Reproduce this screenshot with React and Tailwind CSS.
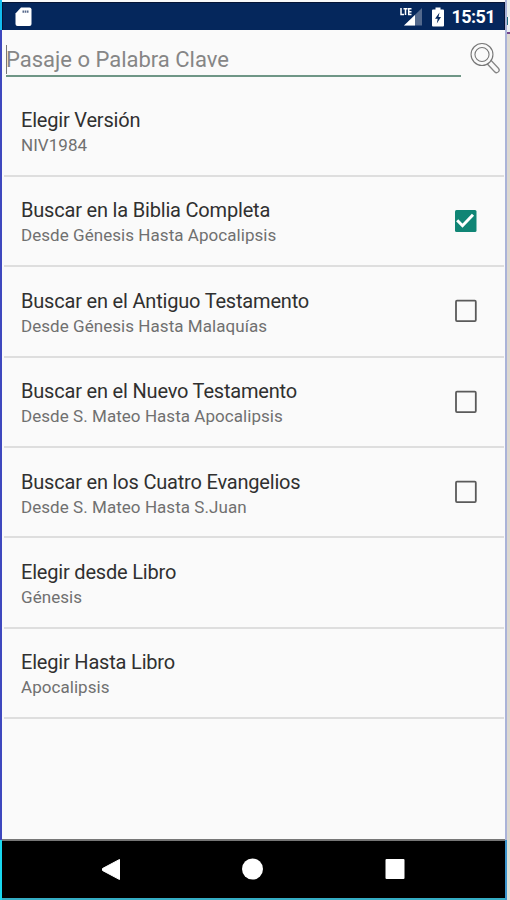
import { useState } from 'react';

const initialRows = [
  { title: 'Elegir Versión', detail: 'NIV1984' },
  { title: 'Buscar en la Biblia Completa', detail: 'Desde Génesis Hasta Apocalipsis', checked: true },
  { title: 'Buscar en el Antiguo Testamento', detail: 'Desde Génesis Hasta Malaquías', checked: false },
  { title: 'Buscar en el Nuevo Testamento', detail: 'Desde S. Mateo Hasta Apocalipsis', checked: false },
  { title: 'Buscar en los Cuatro Evangelios', detail: 'Desde S. Mateo Hasta S.Juan', checked: false },
  { title: 'Elegir desde Libro', detail: 'Génesis' },
  { title: 'Elegir Hasta Libro', detail: 'Apocalipsis' },
];

const Checkbox = ({ checked, onClick }) => (
  <button type="button" role="checkbox" aria-checked={checked} onClick={onClick} className="mt-8 h-6 w-6">
    <svg width="24" height="24" viewBox="0 0 24 24" fill="none">
      {checked ? (
        <>
          <rect x="1" y="1" width="21.5" height="22" rx="1.5" fill="#108575" />
          <path d="M3.2 11.2 L8.500 16.700 L19 5.700" stroke="#fff" strokeWidth="3" />
        </>
      ) : (
        <rect x="2" y="1.700" width="19.800" height="20.400" rx="1" stroke="#5a5a5a" strokeWidth="1.8" />
      )}
    </svg>
  </button>
);

const StatusBar = () => (
  <div className="flex h-7 items-center justify-between border border-b-0 border-[#061536] bg-[#05275c] pr-[9px] pl-3">
    <svg width="18" height="20" viewBox="0 0 18 20">
      <path d="M6 0.500 H14.500 Q16.500 0.500 16.500 2.500 V17 Q16.500 19 14.500 19 H2.500 Q0.500 19 0.500 17 V6.500 Z" fill="#fff" />
      <path d="M7.500 4.700h6.500" stroke="#596b8c" strokeWidth="2.200" strokeDasharray="1.600 0.600" />
    </svg>
    <div className="flex items-center">
      <svg width="23" height="20" viewBox="0 0 23 20">
        <path d="M22 1 V18.500 H4 Z" fill="#53698d" />
        <path d="M15 8 V18.500 H4 Z" fill="#fff" />
        <path d="M0 0 H11.500 V9.500 H0 Z" fill="#05275c" />
        <path d="M1 1v6.500h3M3.500 1.700h4M5.500 1.700V8M11.500 1.700H8.700V7.600h2.800M8.700 4.700h2.800" stroke="#fff" strokeWidth="1.500" fill="none" />
      </svg>
      <svg className="ml-2" width="14" height="20" viewBox="0 0 14 20">
        <path d="M4.500 0.500 h5 v2 H12 q1 0 1 1 V18.500 q0 1 -1 1 H2 q-1 0 -1 -1 V3.500 q0 -1 1 -1 H4.500 Z" fill="#fff" />
        <path d="M8.500 5.500 L4 11.800 H6.700 L5.800 16.500 L10 10 H7.500 Z" fill="#05275c" />
      </svg>
      <span className="ml-[7px] text-[18px] leading-7 font-bold tracking-[-0.6px] text-white">15:51</span>
    </div>
  </div>
);

const SearchBar = () => (
  <div className="flex h-[56.5px] shrink-0 items-start">
    <div className="ml-1 flex h-[47px] w-[455px] items-center border-b-2 border-[#6f9686] pt-[13px]">
      <span className="h-[29px] w-px shrink-0 bg-[#777]" />
      <span className="-ml-px text-[22px] whitespace-nowrap text-[#868686]">Pasaje o Palabra Clave</span>
    </div>
    <svg className="mt-[11px] ml-[7px]" width="34" height="34" viewBox="0 0 34 34" fill="none">
      <path d="M21 21 L28.500 29" stroke="#858585" strokeWidth="6.500" strokeLinecap="round" />
      <path d="M21.500 21.500 L28.500 29" stroke="#fafafa" strokeWidth="4" strokeLinecap="round" />
      <circle cx="14" cy="13.500" r="9" fill="#fafafa" stroke="#777" strokeWidth="5" />
      <circle cx="14" cy="13.500" r="9" stroke="#fafafa" strokeWidth="2.800" />
    </svg>
  </div>
);

const OptionRow = ({ row, onToggle }) => (
  <div className="ml-[2px] flex h-[90.4px] w-[500px] shrink-0 justify-between border-b-2 border-[#dedede] pr-[26px] pl-[17px]">
    <div className="pt-[20.5px]">
      <div className="text-[20px] leading-[26px] tracking-[-0.19px] whitespace-nowrap text-[#303030]">{row.title}</div>
      <div className="text-[17px] leading-[24px] tracking-[0.05px] whitespace-nowrap text-[#707070]">{row.detail}</div>
    </div>
    {row.checked !== undefined && <Checkbox checked={row.checked} onClick={onToggle} />}
  </div>
);

const NavigationBar = () => (
  <div className="flex h-[61px] items-start justify-between border-t-2 border-b-2 border-t-[#777] border-b-[#35adc4] bg-black pr-[100px] pl-[99px] pt-[17px]">
    <svg width="20" height="24" viewBox="0 0 20 24">
      <path d="M18.500 1.500 V21.500 L1.500 12.500 V10.500 Z" fill="#fff" stroke="#fff" strokeLinejoin="round" />
    </svg>
    <svg width="22" height="22" viewBox="0 0 22 22">
      <circle cx="10.5" cy="11" r="10.5" fill="#fff" />
    </svg>
    <svg width="20" height="22" viewBox="0 0 20 22">
      <rect x="0.500" y="1" width="19" height="20" rx="1" fill="#fff" />
    </svg>
  </div>
);

const App = () => {
  const [rows, setRows] = useState(initialRows);

  const toggle = (index) => {
    setRows(rows.map((row, i) => (i === index ? { ...row, checked: !row.checked } : row)));
  };

  return (
    <div className="flex h-[900px] w-[510px] overflow-hidden bg-[#fafafa] font-[Roboto,sans-serif]">
      <div className="flex w-[2px] flex-col">
        <div className="h-[30px] bg-[#12bdf0]" />
        <div className="grow bg-[#3e48be]" />
        <div className="h-[60px] bg-[#18d7ef]" />
      </div>
      <div className="flex w-[503px] flex-col pt-[2px]">
        <StatusBar />
        <SearchBar />
        <div className="flex grow flex-col">
          {rows.map((row, index) => (
            <OptionRow key={row.title} row={row} onToggle={() => toggle(index)} />
          ))}
        </div>
        <NavigationBar />
      </div>
      <div className="flex w-[2px] flex-col">
        <div className="grow bg-[#aab3d8]" />
        <div className="h-[60px] bg-[#3c94cc]" />
      </div>
      <div className="flex grow flex-col">
        <div className="h-[17px] bg-[#e8eeee]" />
        <div className="h-[8px] w-px bg-[#1e6c7c]" />
        <div className="h-[7px] bg-[#edf0f3]" />
        <div className="h-[2px] bg-[#74458b]" />
        <div className="grow bg-[#ddd8d1]" />
        <div className="h-[60px] bg-[#dce0d8]" />
      </div>
    </div>
  );
};

export default App;
